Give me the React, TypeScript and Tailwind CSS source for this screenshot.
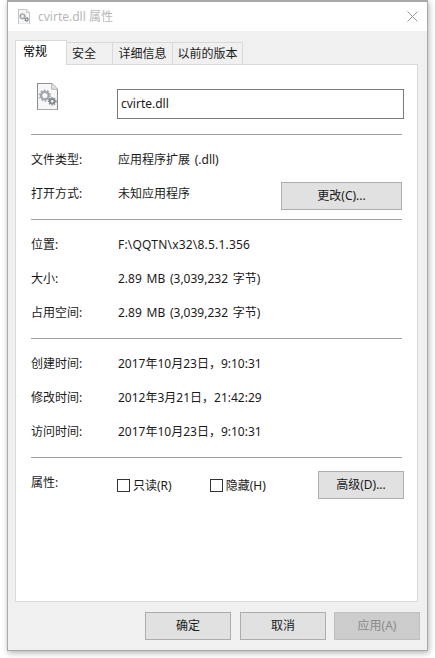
import React from "react";

const font = { fontFamily: '"Noto Sans", "Noto Sans CJK SC", sans-serif' };

function Gears({ size }: { size: number }) {
  return (
    <svg width={size} height={size * 1.3} viewBox="0 0 20 26">
      <path d="M0.5 0.5H14L19.5 6V25.5H0.5Z" fill="#f6f7f9" stroke="#8f8f8f" />
      <path d="M14 0.5V6H19.5" fill="#e6e6e6" stroke="#b5b5b5" />
      <circle cx="7.5" cy="12" r="3.6" fill="none" stroke="#a2a5a8" strokeWidth="2.2" />
      <circle cx="7.5" cy="12" r="5.1" fill="none" stroke="#a2a5a8" strokeWidth="1.3" strokeDasharray="1.6 1.6" />
      <circle cx="14.5" cy="17.5" r="2.2" fill="none" stroke="#85888b" strokeWidth="1.9" />
      <circle cx="14.5" cy="17.5" r="3.6" fill="none" stroke="#85888b" strokeWidth="1.1" strokeDasharray="1.3 1.3" />
    </svg>
  );
}

function Divider() {
  return <div className="h-px bg-[#a0a0a0] mr-px" />;
}

function Row({ label, value, valueClass = "" }: { label: string; value: string; valueClass?: string }) {
  return (
    <div className="flex items-center h-[34px]">
      <span className="w-[87px] shrink-0">{label}</span>
      <span className={valueClass}>{value}</span>
    </div>
  );
}

function Btn({ children, disabled }: { children: React.ReactNode; disabled?: boolean }) {
  return (
    <div
      className={
        disabled
          ? "flex items-center justify-center w-[86px] h-[28px] border border-[#bfbfbf] bg-[#cccccc] text-[#8a8a8a]"
          : "flex items-center justify-center w-[86px] h-[28px] border border-[#adadad] bg-[#e1e1e1]"
      }
    >
      {children}
    </div>
  );
}

function Check({ label }: { label: string }) {
  return (
    <div className="flex items-center gap-[3px]">
      <div className="w-[13px] h-[13px] border border-[#333333] bg-white" />
      <span>{label}</span>
    </div>
  );
}

function Tab({ label, w, active, left }: { label: string; w: string; active?: boolean; left?: boolean }) {
  return active ? (
    <div className={`${w} h-[25px] -mb-px z-10 relative bg-white border border-b-0 border-[#d9d9d9] pl-[7px] pt-[3px] text-black`}>{label}</div>
  ) : (
    <div className={`${w} h-[22px] bg-[#f0f0f0] border border-b-0 border-l-0 border-[#d9d9d9] flex items-center ${left ? "justify-start pl-[5px]" : "justify-center"}`}>{label}</div>
  );
}

export default function App() {
  return (
    <div className="w-[435px] h-[658px] bg-white pl-[7px] text-[12px] leading-[16px] text-[#1a1a1a] overflow-hidden [word-spacing:1.6px]" style={font}>
      <div className="w-[421px] h-[651px] border border-[#a8a8a8] border-t-2 bg-[#f0f0f0] shadow-[1px_2px_6px_rgba(0,0,0,0.3)] flex flex-col">
        <div className="h-[29px] bg-white flex items-center justify-between pl-[10px] pr-[9px] shrink-0">
          <div className="flex items-center gap-[4px] text-[12px] text-[#b8b8b8] [word-spacing:0px]">
            <Gears size={12} />
            <span className="ml-[4px]">cvirte.dll 属性</span>
          </div>
          <svg width="11" height="11" viewBox="0 0 11 11">
            <path d="M0.5 0.5L10.5 10.5M10.5 0.5L0.5 10.5" stroke="#8a8a8a" strokeWidth="0.9" />
          </svg>
        </div>

        <div className="flex-1 flex flex-col pl-[7px] pr-[9px] pt-[9px]">
          <div className="flex items-end h-[24px] relative">
            <Tab label="常规" w="w-[52px]" active />
            <Tab label="安全" w="w-[46px]" left />
            <Tab label="详细信息" w="w-[60px]" />
            <Tab label="以前的版本" w="w-[70px]" />
          </div>
          <div className="h-[538px] bg-white border border-[#d9d9d9] pl-[15px] pr-[14px] pt-[12px]">
            <div className="h-[57px] flex items-start">
              <div className="w-[21px] ml-[6px] mt-[6px] shrink-0">
                <Gears size={21} />
              </div>
              <div className="ml-[59px] mt-[12px] w-[287px] h-[30px] border border-[#7a7a7a] flex items-center pl-[3px] -mr-[2px]">
                cvirte.dll
              </div>
            </div>
            <Divider />
            <div className="pt-[8px] h-[84px] flex flex-col">
              <Row label="文件类型:" value="应用程序扩展 (.dll)" />
              <div className="flex items-center h-[34px]">
                <span className="w-[87px] shrink-0">打开方式:</span>
                <span className="flex-1">未知应用程序</span>
                <div className="flex items-center justify-center w-[121px] h-[28px] border border-[#adadad] bg-[#e1e1e1] mr-[1px] mt-[4px]">更改(C)...</div>
              </div>
            </div>
            <Divider />
            <div className="pt-[8px] h-[118px]">
              <Row label="位置:" value="F:\QQTN\x32\8.5.1.356" valueClass="tracking-[0.2px]" />
              <Row label="大小:" value="2.89 MB (3,039,232 字节)" />
              <Row label="占用空间:" value="2.89 MB (3,039,232 字节)" />
            </div>
            <Divider />
            <div className="pt-[8px] h-[118px]">
              <Row label="创建时间:" value="2017年10月23日，9:10:31" />
              <Row label="修改时间:" value="2012年3月21日，21:42:29" />
              <Row label="访问时间:" value="2017年10月23日，9:10:31" />
            </div>
            <Divider />
            <div className="flex items-start pt-[13px]">
              <span className="w-[86px] shrink-0 pt-[4px]">属性:</span>
              <div className="flex-1 flex items-center gap-[38px] h-[28px] pt-[1px]">
                <Check label="只读(R)" />
                <Check label="隐藏(H)" />
              </div>
              <div className="flex items-center justify-center w-[86px] h-[28px] border border-[#adadad] bg-[#e1e1e1] -mr-px">高级(D)...</div>
            </div>
          </div>
          <div className="flex justify-end gap-[9px] pt-[10px] -mr-[2px]">
            <Btn>确定</Btn>
            <Btn>取消</Btn>
            <div className="-ml-px">
              <Btn disabled>应用(A)</Btn>
            </div>
          </div>
        </div>
      </div>
    </div>
  );
}
